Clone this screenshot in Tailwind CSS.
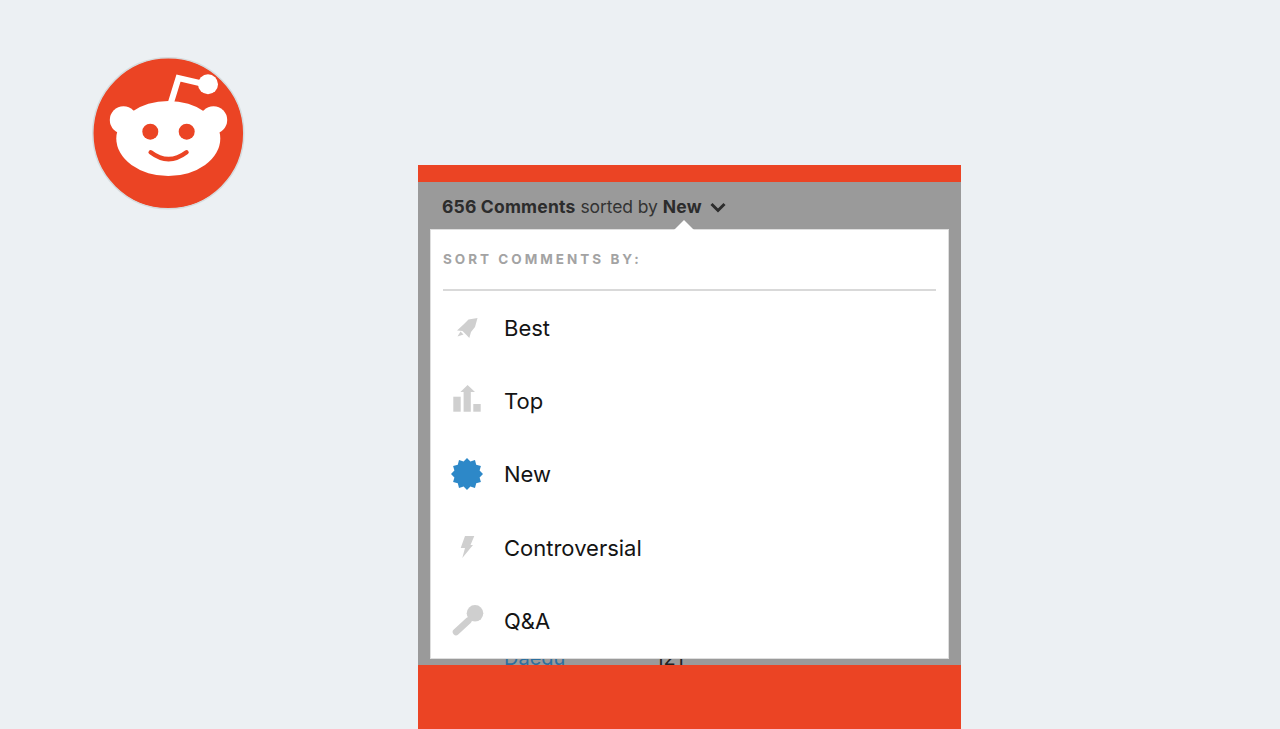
<!DOCTYPE html>
<html lang="en">

<head>
  <meta charset="UTF-8">
  <meta name="viewport" content="width=device-width, initial-scale=1.0">
  <script src="https://cdn.jsdelivr.net/npm/@tailwindcss/browser@4"></script>
  <title>Reddit comment sorting</title>
</head>

<body class="m-0 h-[729px] overflow-hidden bg-[#ecf0f3] font-['Inter',sans-serif]">
  <div class="flex items-start pl-[92px] pt-[57px]">
    <!-- logo -->
    <svg class="w-[153px] h-[153px] shrink-0" viewBox="92 57 153 153">
      <circle cx="168.3" cy="133.3" r="75.5" fill="#eb4424" stroke="#d5dcde" stroke-width="1.5" />
      <path d="M170.5 104 L178.5 78 L206 84.5" fill="none" stroke="#fff" stroke-width="6" />
      <circle cx="208" cy="84.3" r="10" fill="#fff" />
      <circle cx="123.5" cy="120" r="13.7" fill="#fff" />
      <circle cx="213.5" cy="120" r="13.7" fill="#fff" />
      <ellipse cx="168.3" cy="138.5" rx="52" ry="37.5" fill="#fff" />
      <circle cx="150.3" cy="131.7" r="8" fill="#eb4424" />
      <circle cx="186.7" cy="131.7" r="8" fill="#eb4424" />
      <path d="M150.7 152.3 Q168.5 166 186.5 152.3" fill="none" stroke="#eb4424" stroke-width="4.5" stroke-linecap="round" />
    </svg>

    <!-- phone screenshot -->
    <div class="ml-[173px] mt-[108px] w-[543px] shrink-0 flex flex-col">
      <div class="h-[17px] bg-[#eb4424]"></div>
      <div class="h-[483px] bg-[#9a9a9a] flex flex-col px-3">
        <div class="h-[47px] pl-3 pt-[3px] flex items-center text-[17.5px] leading-5 text-[#2c2c2c]">
          <span class="font-bold tracking-[0.2px]">656 Comments</span>
          <span class="ml-[5px] text-[#333] tracking-[-0.1px]">sorted by</span>
          <span class="ml-[5px] font-bold tracking-[0.2px]">New</span>
          <svg class="ml-2 w-4 h-4" viewBox="0 0 16 16">
            <path d="M1.5 5 L8 11.5 L14.5 5" fill="none" stroke="#2c2c2c" stroke-width="3" />
          </svg>
        </div>
        <div class="relative h-[430px] bg-white border border-[#dedede] flex flex-col">
          <div class="absolute left-[243px] -top-[10px] w-0 h-0 border-x-[10px] border-x-transparent border-b-[10px] border-b-white"></div>
          <div class="mx-3 h-[62px] border-b-2 border-[#d9d9d9] flex items-center text-[13.5px] font-bold tracking-[3px] text-[#a3a3a3]">SORT COMMENTS BY:</div>
          <div class="mt-px flex flex-col text-[22px] text-[#141414]">
            <div class="h-[73.25px] flex items-center gap-[17px] pl-4">
              <svg class="w-10 h-10" viewBox="447 308 40 40" fill="#cfcfcf">
                <polygon points="477.5,318 468.5,319.5 463.5,324.5 457,330.5 462.5,331 466,334.5 469.3,338 471,332 475,327" />
                <polygon points="457.5,336.5 460.5,331.5 463.5,334.5" />
              </svg>
              <span>Best</span>
            </div>
            <div class="h-[73.25px] flex items-center gap-[17px] pl-4">
              <svg class="w-10 h-10" viewBox="447 382 40 40" fill="#cfcfcf">
                <rect x="453.3" y="396.7" width="7.4" height="15" />
                <polygon points="467.6,385 475,392 470.8,392 470.8,411.7 463.6,411.7 463.6,392 460.4,392" />
                <rect x="473.3" y="404" width="7.4" height="7.7" />
              </svg>
              <span>Top</span>
            </div>
            <div class="h-[73.25px] flex items-center gap-[17px] pl-4">
              <svg class="w-10 h-10" viewBox="-20 -19 40 40" fill="#2d88c8">
                <polygon points="0,-16 3.4,-12.6 8,-13.9 9.2,-9.2 13.9,-8 12.6,-3.4 16,0 12.6,3.4 13.9,8 9.2,9.2 8,13.9 3.4,12.6 0,16 -3.4,12.6 -8,13.9 -9.2,9.2 -13.9,8 -12.6,3.4 -16,0 -12.6,-3.4 -13.9,-8 -9.2,-9.2 -8,-13.9 -3.4,-12.6" />
              </svg>
              <span>New</span>
            </div>
            <div class="h-[73.25px] flex items-center gap-[17px] pl-4">
              <svg class="w-10 h-10" viewBox="447 528 40 40" fill="#cfcfcf">
                <polygon points="465,536 474.3,536 470.5,545 473,545 462.3,558 465,548 460.7,548" />
              </svg>
              <span>Controversial</span>
            </div>
            <div class="h-[73.25px] flex items-center gap-[17px] pl-4">
              <svg class="w-10 h-10" viewBox="447 601 40 40">
                <circle cx="475" cy="613.3" r="8.3" fill="#cfcfcf" />
                <path d="M468.5 620.5 L456 632" fill="none" stroke="#cfcfcf" stroke-width="6.5" stroke-linecap="round" />
              </svg>
              <span>Q&amp;A</span>
            </div>
          </div>
        </div>
        <!-- sliver of the list behind the menu -->
        <div class="h-[6px] overflow-hidden flex text-[20px] leading-6">
          <span class="ml-[74px] -mt-[13px] text-[#2d6f9e]">Daegu</span>
          <span class="ml-[90px] -mt-[13px] text-[#222]">121</span>
        </div>
      </div>
      <div class="h-[64px] bg-[#eb4424]"></div>
    </div>
  </div>
</body>

</html>
